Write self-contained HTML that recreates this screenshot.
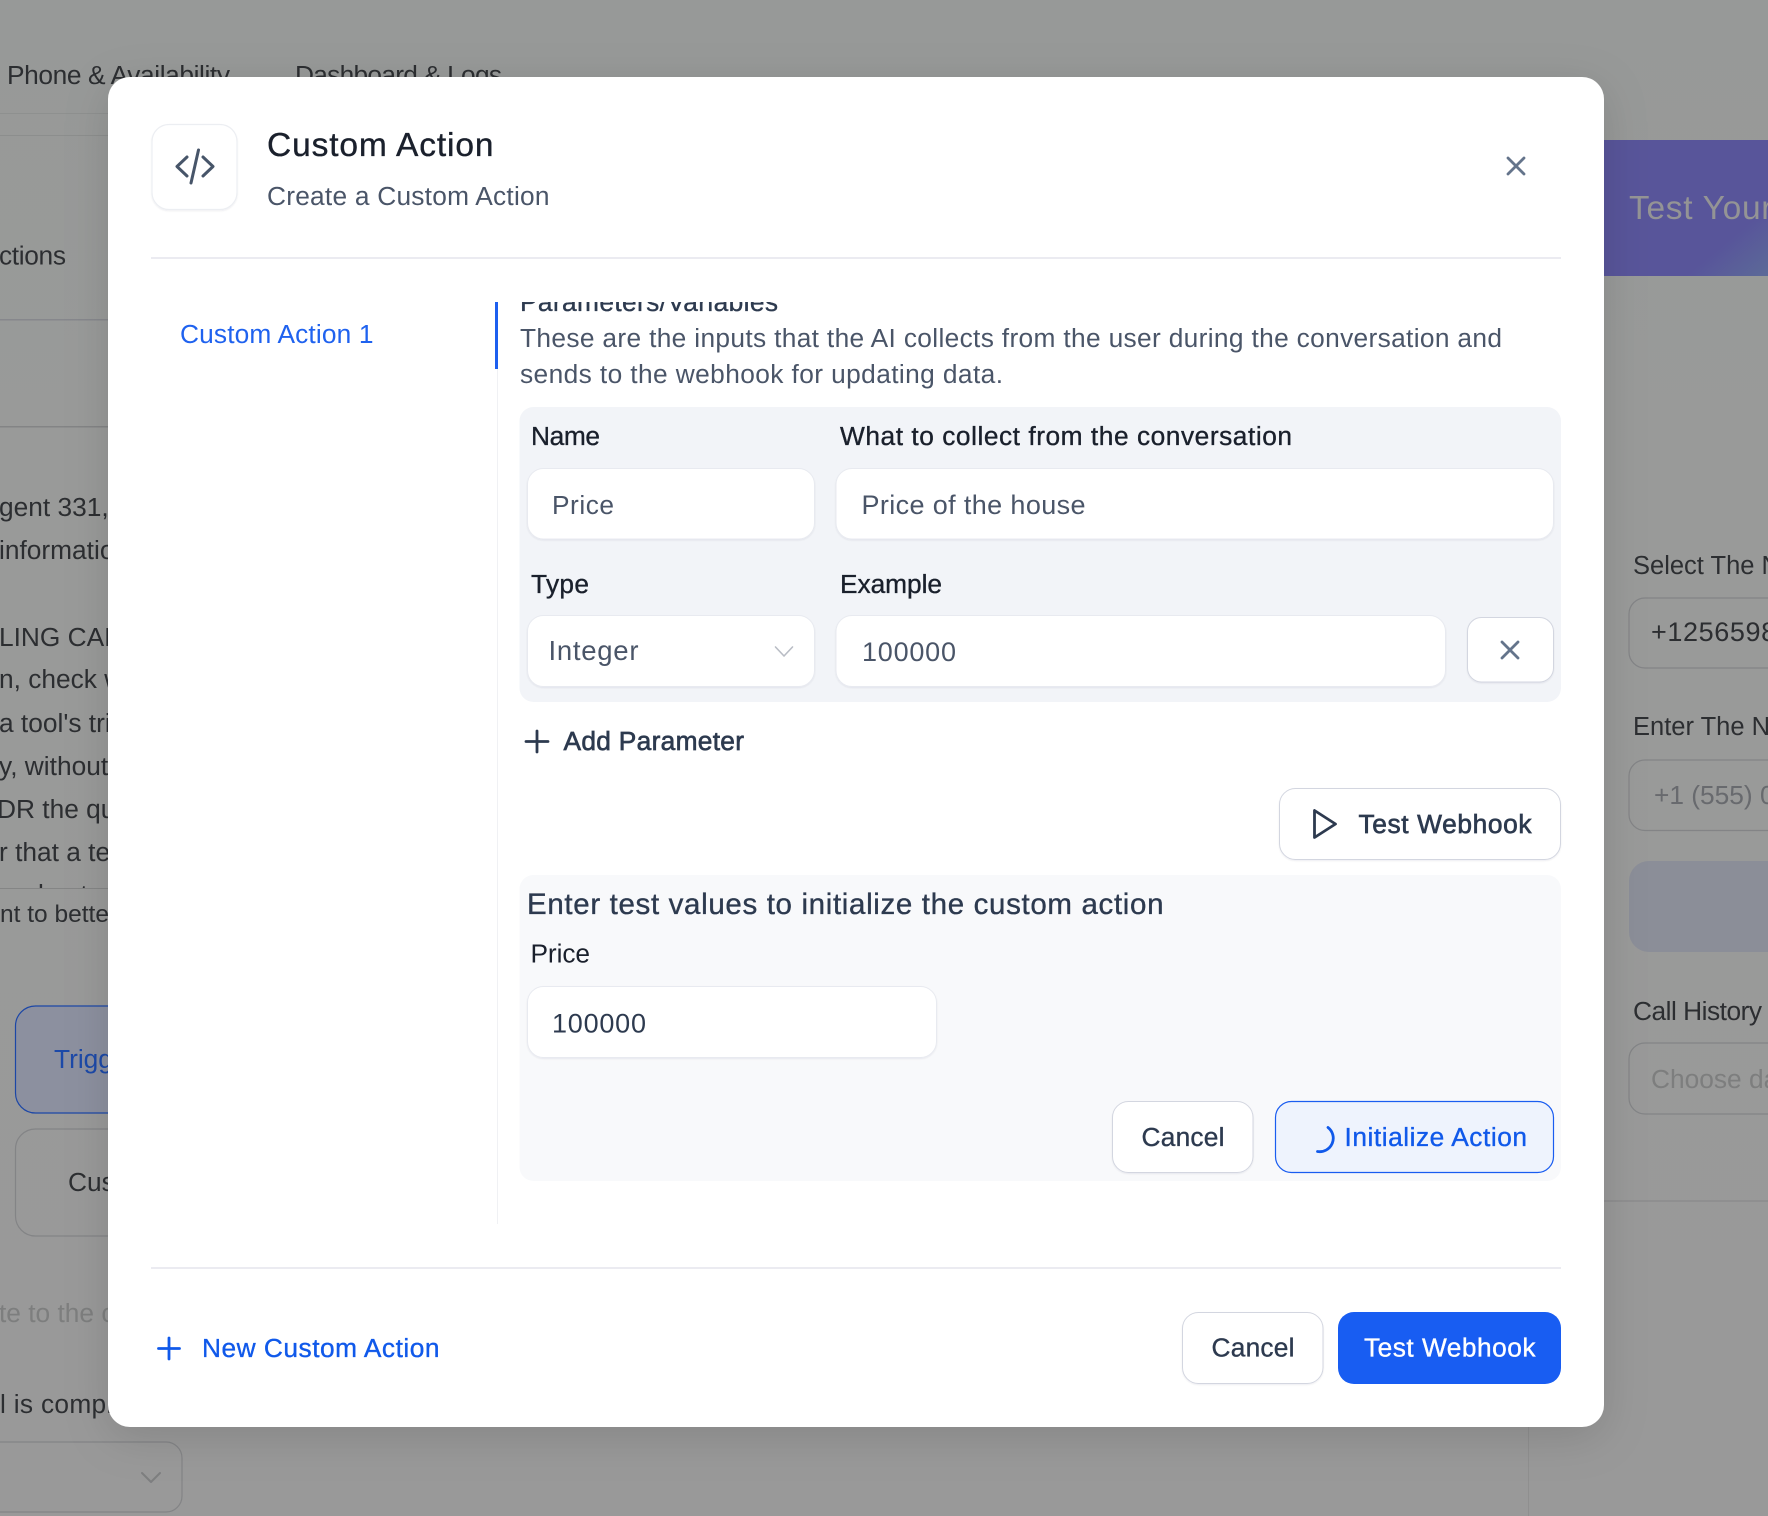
<!DOCTYPE html>
<html lang="en"><head><meta charset="utf-8"><title>Custom Action</title>
<style>
html,body{margin:0;padding:0;width:1768px;height:1516px;overflow:hidden;background:#999a99}
svg{display:block}
text{font-family:"Liberation Sans",sans-serif;font-size:26.3px}
.m{stroke:currentColor;stroke-width:.35px}
.s{stroke:currentColor;stroke-width:.65px}
.bg{fill:#2c2e31;color:#2c2e31}
.d{fill:#4a5568;color:#4a5568}
.k{fill:#1a202c;color:#1a202c}
.n{fill:#2d3a4f;color:#2d3a4f}
.b{fill:#1059ea;color:#1059ea}
.field{fill:#fff;stroke:#e8eaf0;stroke-width:1}
.btn{fill:#fff;stroke:#d3d6e0;stroke-width:1}
.bb{fill:none;stroke:#838486;stroke-width:1.2}
path.i{fill:none;stroke-linecap:round;stroke-linejoin:round}
</style></head><body>
<svg xmlns="http://www.w3.org/2000/svg" width="1768" height="1516" viewBox="0 0 1768 1516">
<defs>
<linearGradient id="bgg" x1="0" y1="0" x2="0" y2="1"><stop offset="0" stop-color="#979998"/><stop offset=".3" stop-color="#999a99"/><stop offset="1" stop-color="#999999"/></linearGradient>
<linearGradient id="pur" x1="0" y1="0" x2="1" y2="1"><stop offset="0" stop-color="#58559a"/><stop offset=".75" stop-color="#58559a"/><stop offset="1" stop-color="#5c6a98"/></linearGradient>
<filter id="ms" x="-10%" y="-10%" width="120%" height="120%"><feDropShadow dx="0" dy="10" stdDeviation="22" flood-color="#000" flood-opacity=".13"/></filter>
<filter id="fs" x="-5%" y="-10%" width="110%" height="125%"><feDropShadow dx="0" dy="1" stdDeviation=".8" flood-color="#1a2440" flood-opacity=".07"/></filter>
<clipPath id="c1"><rect x="500" y="302" width="1100" height="200"/></clipPath>
<clipPath id="c2"><rect x="0" y="860" width="108" height="28"/></clipPath>
</defs>

<!-- dimmed page behind the dialog -->
<rect width="1768" height="1516" fill="url(#bgg)"/>
<text class="bg" x="7" y="84" textLength="223">Phone &amp; Availability</text>
<text class="bg" x="295" y="84" textLength="207">Dashboard &amp; Logs</text>
<rect x="0" y="113" width="108" height="1" fill="#8e908f"/>
<rect x="0" y="135" width="108" height="1" fill="#8c8e8d"/>
<text class="bg" x="-1" y="264.500" textLength="67">ctions</text>
<rect x="0" y="319" width="108" height="1.5" fill="#86878c"/>
<rect x="0" y="426" width="108" height="1.5" fill="#838485"/>
<text class="bg" x="-1" y="516">gent 331, your</text>
<text class="bg" x="-1" y="559">information</text>
<text class="bg" x="-1" y="646">LING CALLS</text>
<text class="bg" x="-1" y="688">n, check when</text>
<text class="bg" x="-1" y="732">a tool's trigger</text>
<text class="bg" x="-1" y="775">y, without</text>
<text class="bg" x="-3" y="818">DR the question</text>
<text class="bg" x="-1" y="861">r that a test</text>
<text class="bg" x="0" y="903" clip-path="url(#c2)">understand</text>
<rect x="0" y="888" width="108" height="1" fill="#848585"/>
<text class="bg" x="0" y="922" style="font-size:24.5px">nt to better</text>
<rect x="15.5" y="1006" width="140" height="107" rx="20" fill="#8c909f" stroke="#1c47a6" stroke-width="1.2"/>
<text x="54" y="1068" fill="#1c49a8">Trigger</text>
<rect x="15.5" y="1129" width="140" height="107" rx="20" class="bb"/>
<text class="bg" x="68" y="1191">Custom</text>
<text x="-1" y="1322" fill="#7d7e7e">te to the caller</text>
<text class="bg" x="0" y="1413" letter-spacing=".3">l is complete</text>
<rect x="-20" y="1442" width="202" height="70" rx="16" class="bb"/>
<path class="i" d="M142 1473l9 9 9-9" stroke="#7d7e80" stroke-width="2"/>
<rect x="1528" y="1427" width="1" height="89" fill="#8f8f8f"/>
<rect x="1604" y="1200" width="164" height="2" fill="#8f8f90"/>
<rect x="1604" y="140" width="164" height="136" fill="url(#pur)"/>
<text x="1629" y="219" fill="#949495" style="font-size:33.5px" letter-spacing=".7">Test Your</text>
<text class="bg" x="1633" y="574" style="font-size:25.5px">Select The N</text>
<rect x="1629" y="598" width="180" height="70" rx="16" class="bb"/>
<text class="bg" x="1651" y="641" style="font-size:27px" letter-spacing=".6">+1256598</text>
<text class="bg" x="1633" y="735" style="font-size:25.5px">Enter The Nu</text>
<rect x="1629" y="760" width="180" height="70.5" rx="16" class="bb"/>
<text x="1654" y="804" fill="#686a6e">+1 (555) 0</text>
<rect x="1629" y="861" width="180" height="91" rx="20" fill="#8b8e98"/>
<text class="bg" x="1633" y="1020" textLength="129">Call History</text>
<rect x="1629" y="1043" width="180" height="71" rx="16" class="bb"/>
<text x="1651" y="1088" fill="#7d7e7e">Choose date</text>

<!-- dialog -->
<rect x="108" y="77" width="1496" height="1350" rx="22" fill="#fff" filter="url(#ms)"/>

<!-- header -->
<rect x="152" y="124.5" width="85" height="85" rx="17" fill="#fff" stroke="#eceef2" stroke-width="1.2" filter="url(#fs)"/>
<path class="i" d="M187 157l-10 9.500 10 9.500M203 157l10 9.500-10 9.500M198.500 150l-7.500 33" stroke="#475569" stroke-width="3"/>
<text x="267" y="156" class="k m" style="font-size:33.5px" textLength="226.500">Custom Action</text>
<text x="267" y="205" class="d" textLength="282.500">Create a Custom Action</text>
<path class="i" d="M1508 158l16 16M1524 158l-16 16" stroke="#64748b" stroke-width="2.800"/>
<rect x="151" y="257" width="1410" height="2" fill="#ebebf1"/>

<!-- sidebar -->
<text x="180" y="343" fill="#1f62ef" textLength="193.500">Custom Action 1</text>
<rect x="497" y="302" width="1" height="922" fill="#f0f1f4"/>
<rect x="495" y="302" width="3" height="67" fill="#1d5fef"/>

<!-- content -->
<text x="520" y="311" class="n m" clip-path="url(#c1)" textLength="258">Parameters/Variables</text>
<text x="520" y="347" class="d" textLength="982">These are the inputs that the AI collects from the user during the conversation and</text>
<text x="520" y="383" class="d" textLength="483">sends to the webhook for updating data.</text>

<rect x="519.5" y="407" width="1041.5" height="295" rx="14" fill="#f2f4f8"/>
<text x="531" y="445" class="k m" textLength="69">Name</text>
<text x="840" y="445" class="k m" textLength="452">What to collect from the conversation</text>
<rect x="527.5" y="468.5" width="287" height="70.5" rx="16" class="field" filter="url(#fs)"/>
<text x="552" y="514" class="d" textLength="62">Price</text>
<rect x="836" y="468.5" width="717.5" height="70.5" rx="16" class="field" filter="url(#fs)"/>
<text x="861.5" y="514" class="d" style="font-size:27px" textLength="224">Price of the house</text>
<text x="531" y="593" class="k m" textLength="58">Type</text>
<text x="840" y="593" class="k m" textLength="102">Example</text>
<rect x="527.5" y="615.5" width="287" height="71" rx="16" class="field" filter="url(#fs)"/>
<text x="548.5" y="660" class="d" style="font-size:27.5px" textLength="90">Integer</text>
<path class="i" d="M775.500 647l8.500 9 8.500-9" stroke="#b9bdc5" stroke-width="1.600"/>
<rect x="836" y="615.5" width="609.5" height="71" rx="16" class="field" filter="url(#fs)"/>
<text x="862" y="661" class="d" style="font-size:27px" textLength="94">100000</text>
<rect x="1467.5" y="617.5" width="86" height="64.500" rx="14" class="btn" filter="url(#fs)"/>
<path class="i" d="M1502 642l16 16M1518 642l-16 16" stroke="#64748b" stroke-width="2.800"/>

<path class="i" d="M537 731v21M526 741.500h22" stroke="#2d3a4f" stroke-width="2.800"/>
<text x="563.5" y="750" class="n s" textLength="180.500">Add Parameter</text>

<rect x="1279.5" y="788.5" width="281" height="71" rx="16" class="btn" filter="url(#fs)"/>
<path class="i" d="M1314.500 810.500v27l21-13.500z" stroke="#2d3a4f" stroke-width="2.800"/>
<text x="1358.5" y="833" class="n s" textLength="173">Test Webhook</text>

<rect x="519.5" y="875" width="1041.5" height="306" rx="14" fill="#f8f9fb"/>
<text x="527" y="914" class="n m" style="font-size:29.5px" textLength="636.500">Enter test values to initialize the custom action</text>
<text x="530.5" y="962.500" class="k" textLength="59.500">Price</text>
<rect x="527.5" y="986.5" width="409" height="71" rx="16" class="field" filter="url(#fs)"/>
<text x="552" y="1032.500" class="n" style="font-size:27px" textLength="94">100000</text>
<rect x="1112.5" y="1101.5" width="140.500" height="71" rx="16" class="btn" filter="url(#fs)"/>
<text x="1141.5" y="1146" class="n m" textLength="83">Cancel</text>
<rect x="1275.5" y="1101.5" width="278" height="71" rx="16" fill="#eef3fd" stroke="#1a5df0" stroke-width="1.2"/>
<path class="i" d="M1328 1127.500A13.500 13.500 0 0 1 1317.500 1151.500" stroke="#1059ea" stroke-width="2.800"/>
<text x="1344.5" y="1146" class="b m" textLength="182.500">Initialize Action</text>

<!-- footer -->
<rect x="151" y="1267" width="1410" height="2" fill="#ebebf1"/>
<path class="i" d="M169 1338v21M158.500 1348.500h21" stroke="#1059ea" stroke-width="2.800"/>
<text x="202" y="1357" class="b m" textLength="237.500">New Custom Action</text>
<rect x="1182.5" y="1312.5" width="140.500" height="71" rx="16" class="btn" filter="url(#fs)"/>
<text x="1211.5" y="1356.500" class="n m" textLength="83">Cancel</text>
<rect x="1338" y="1312" width="223" height="72" rx="16" fill="#185df2"/>
<text x="1364" y="1356.500" fill="#fff" color="#fff" class="m" textLength="171.500">Test Webhook</text>
</svg>
</body></html>
